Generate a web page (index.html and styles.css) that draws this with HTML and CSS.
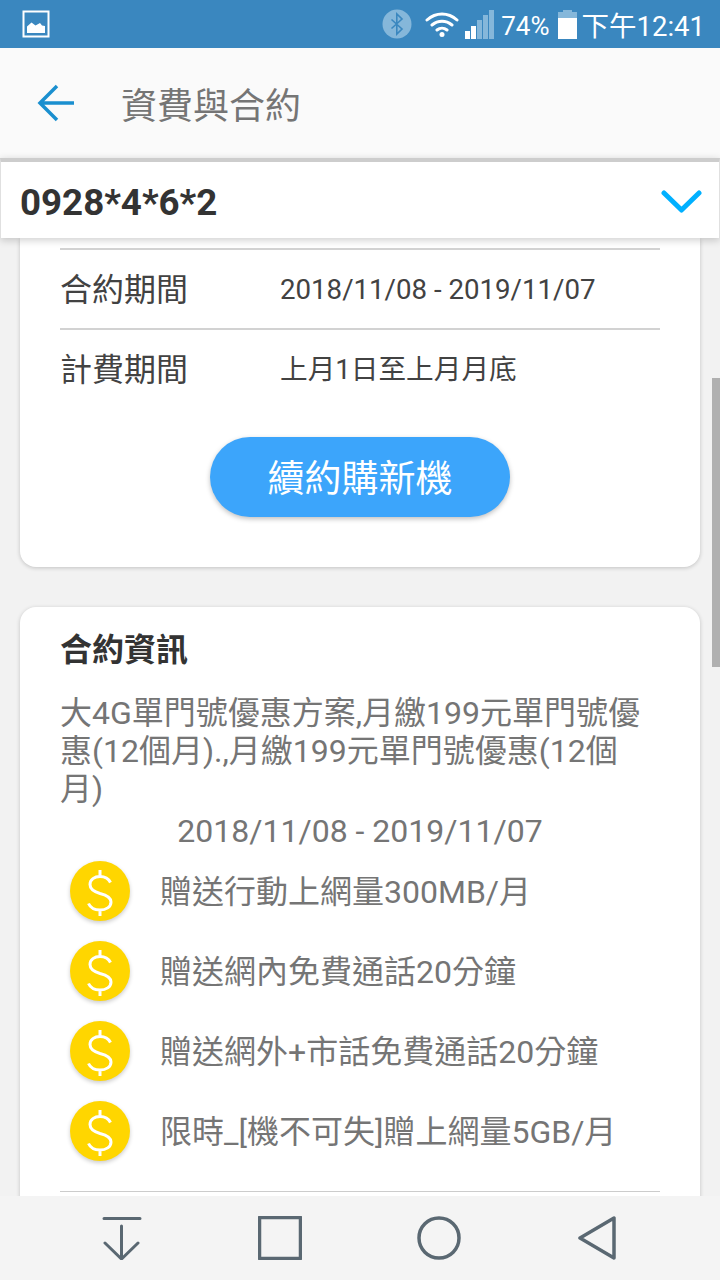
FILE: index.html
```html
<!DOCTYPE html>
<html lang="zh-Hant">
<head>
  <meta charset="UTF-8">
  <title>資費與合約</title>
  <link rel="stylesheet" href="styles.css">
</head>
<body>
  <div class="screen">
    <div class="statusbar">
      <svg class="pic-icon" width="28" height="28" viewBox="0 0 28 28">
        <rect x="1.500" y="1.500" width="25" height="25" fill="none" stroke="#fff" stroke-width="2"/>
        <path d="M5 23V16.500L9.500 12.500L13.500 15.500L18 13L20 15.500L23 16V23Z" fill="#fff"/>
      </svg>
      <div class="status-right">
        <svg width="30" height="30" viewBox="0 0 30 30">
          <circle cx="15" cy="15" r="14.500" fill="#85b7da"/>
          <path d="M9.500 10.500L20 20L14.800 25V5L20 10L9.500 19.500" fill="none" stroke="#3a87bf" stroke-width="1.600"/>
        </svg>
        <svg class="wifi" width="34" height="28" viewBox="0 0 34 28">
          <path d="M2 10C11 2 23 2 32 10M7 15C13 10 21 10 27 15M12 20C15 17.500 19 17.500 22 20" fill="none" stroke="#fff" stroke-width="3" stroke-linecap="round"/>
          <circle cx="17" cy="24.500" r="2.500" fill="#fff"/>
        </svg>
        <svg class="signal" width="29" height="29" viewBox="0 0 29 29">
          <rect x="0" y="21" width="5" height="8" fill="#fff"/>
          <rect x="6" y="16" width="5" height="13" fill="#fff"/>
          <rect x="12" y="10" width="5" height="19" fill="#85b7da"/>
          <rect x="18" y="5" width="5" height="24" fill="#85b7da"/>
          <rect x="24" y="0" width="5" height="29" fill="#85b7da"/>
        </svg>
        <span class="battery-text">74%</span>
        <svg class="battery" width="19" height="29" viewBox="0 0 19 29">
          <path d="M5 0H14V2H19V29H0V2H5Z" fill="#85b7da"/>
          <rect y="8" width="19" height="21" fill="#fff"/>
        </svg>
        <span class="clock">下午12:41</span>
      </div>
    </div>

    <header class="topbar">
      <svg class="back" width="38" height="38" viewBox="0 0 38 38">
        <path d="M37 19H3M20 2L3 19L20 36" fill="none" stroke="#1a8fcf" stroke-width="3.500"/>
      </svg>
      <h1>資費與合約</h1>
    </header>

    <div class="number-select">
      <span>0928*4*6*2</span>
      <svg width="41" height="24" viewBox="0 0 41 24">
        <path d="M3 3L20.500 20L38 3" fill="none" stroke="#00b0ff" stroke-width="5" stroke-linecap="round" stroke-linejoin="round"/>
      </svg>
    </div>

    <div class="content">
      <section class="card card-first">
        <div class="info-row"><span class="info-label">合約期間</span><span class="info-value">2018/11/08 - 2019/11/07</span></div>
        <div class="info-row"><span class="info-label">計費期間</span><span class="info-value info-value-cjk">上月1日至上月月底</span></div>
        <button class="renew">續約購新機</button>
      </section>

      <section class="card card-second">
        <h2>合約資訊</h2>
        <p class="plan">大4G單門號優惠方案,月繳199元單門號優惠(12個月).,月繳199元單門號優惠(12個月)</p>
        <p class="plan-date">2018/11/08 - 2019/11/07</p>
        <ul class="perks">
          <li>
            <svg class="coin" width="60" height="60" viewBox="0 0 60 60"><use href="#dollar"/></svg>
            <span class="perk-text">贈送行動上網量300MB/月</span>
          </li>
          <li>
            <svg class="coin" width="60" height="60" viewBox="0 0 60 60"><use href="#dollar"/></svg>
            <span class="perk-text">贈送網內免費通話20分鐘</span>
          </li>
          <li>
            <svg class="coin" width="60" height="60" viewBox="0 0 60 60"><use href="#dollar"/></svg>
            <span class="perk-text">贈送網外+市話免費通話20分鐘</span>
          </li>
          <li>
            <svg class="coin" width="60" height="60" viewBox="0 0 60 60"><use href="#dollar"/></svg>
            <span class="perk-text">限時_[機不可失]贈上網量5GB/月</span>
          </li>
        </ul>
        <div class="divider"></div>
      </section>
    </div>

    <div class="scrollbar"></div>

    <nav class="navbar">
      <svg width="40" height="44" viewBox="0 0 40 44">
        <path d="M2 2.500H38M19.500 10V43M3 27L19.500 43L36 27" fill="none" stroke="#5a6872" stroke-width="3" stroke-linecap="round" stroke-linejoin="round"/>
      </svg>
      <svg width="44" height="44" viewBox="0 0 44 44">
        <rect x="1.500" y="1.500" width="41" height="41" fill="none" stroke="#5a6872" stroke-width="3.500" stroke-linejoin="round"/>
      </svg>
      <svg width="44" height="44" viewBox="0 0 44 44">
        <circle cx="22" cy="22" r="20" fill="none" stroke="#5a6872" stroke-width="3.500"/>
      </svg>
      <svg width="40" height="44" viewBox="0 0 40 44">
        <path d="M37 2V42L3 22Z" fill="none" stroke="#5a6872" stroke-width="3.500" stroke-linejoin="round"/>
      </svg>
    </nav>

    <svg class="icon-defs" width="0" height="0">
      <path id="dollar" d="M40.500 21.500C38.500 17.500 34.500 15.500 30 15.500C24.500 15.500 20 18.500 20 23.500C20 29 25 31 30 32.500C36 34 41 36 41 41C41 46 36 49 30 49C25 49 20.500 47 18.500 42.500M30 9V15.500M30 49V55" fill="none" stroke="#fff" stroke-width="3"/>
    </svg>
  </div>
</body>
</html>
```

FILE: styles.css
```css
* {
  box-sizing: border-box;
}

body {
  margin: 0;
  font-family: Roboto, "Noto Sans CJK TC", sans-serif;
}

.screen {
  position: relative;
  width: 720px;
  height: 1280px;
  display: flex;
  flex-direction: column;
  overflow: hidden;
  background: #f2f2f2;
}

.statusbar {
  height: 48px;
  flex: none;
  display: flex;
  align-items: center;
  justify-content: space-between;
  padding: 0 15px 0 22px;
  background: #3a87bf;
  color: #fff;
}

.status-right {
  display: flex;
  align-items: center;
}

.wifi {
  margin-left: 13px;
}

.signal {
  margin-left: 6px;
}

.battery-text {
  margin: 4px 0 0 7px;
  font-size: 26px;
}

.battery {
  margin-left: 8px;
}

.clock {
  margin-left: 5px;
  font-size: 27.500px;
}

.topbar {
  height: 110px;
  flex: none;
  display: flex;
  align-items: center;
  padding-left: 37px;
  background: #fafafa;
}

.topbar h1 {
  margin: 0 0 0 46px;
  font-size: 36px;
  font-weight: 400;
  color: #757575;
}

.number-select {
  height: 80px;
  flex: none;
  display: flex;
  align-items: center;
  justify-content: space-between;
  padding: 4px 17px 0 19px;
  position: relative;
  z-index: 1;
  background: #fff;
  border-top: 4px solid #cdcdcd;
  border-left: 1px solid #e0e0e0;
  border-right: 1px solid #e0e0e0;
  box-shadow: 0 2px 8px rgba(0, 0, 0, 0.2);
  font-size: 36.700px;
  font-weight: 700;
  color: #333;
}

.content {
  flex: 1;
  min-height: 0;
  padding: 0 20px;
  overflow: hidden;
}

.card {
  background: #fff;
  box-shadow: 0 1px 4px rgba(0, 0, 0, 0.2);
}

.card-first {
  height: 329px;
  padding: 10px 40px 0;
  border-radius: 0 0 16px 16px;
}

.info-row {
  height: 80px;
  display: flex;
  align-items: center;
  border-top: 2px solid #d2d2d2;
}

.info-label {
  width: 220px;
  padding-bottom: 4px;
  font-size: 32px;
  color: #424242;
}

.info-value {
  font-size: 27.650px;
  color: #424242;
}

.info-value-cjk {
  padding-bottom: 4px;
}

.renew {
  display: block;
  width: 300px;
  height: 80px;
  margin: 29px auto 0;
  padding: 0 0 2px;
  border: none;
  border-radius: 40px;
  background: #3ca5fb;
  box-shadow: 0 2px 5px rgba(0, 0, 0, 0.25);
  font-family: inherit;
  font-size: 37px;
  color: #fff;
}

.card-second {
  margin-top: 40px;
  padding: 20px 40px 40px;
  border-radius: 16px 16px 0 0;
}

.card-second h2 {
  margin: 0;
  font-size: 32px;
  font-weight: 700;
  line-height: 46px;
  color: #333;
}

.plan {
  margin: 21px 0 0;
  font-size: 32px;
  line-height: 38px;
  color: #757575;
}

.plan-date {
  margin: 4px 0 0;
  font-size: 32px;
  line-height: 38px;
  text-align: center;
  color: #757575;
}

.perks {
  margin: 0;
  padding: 1px 0 0;
  list-style: none;
}

.perks li {
  height: 80px;
  display: flex;
  align-items: center;
  font-size: 32px;
  color: #757575;
}

.perk-text {
  padding-bottom: 4px;
}

.coin {
  flex: none;
  margin: 0 30px 0 10px;
  border-radius: 50%;
  background: #ffd600;
  box-shadow: 0 2px 4px rgba(0, 0, 0, 0.2);
}

.divider {
  height: 1px;
  margin-top: 20px;
  background: #ccc;
}

.scrollbar {
  position: absolute;
  top: 378px;
  right: 0;
  width: 8px;
  height: 289px;
  background: #b0b0b0;
}

.navbar {
  height: 84px;
  flex: none;
  position: relative;
  z-index: 1;
  display: flex;
  align-items: center;
  justify-content: space-between;
  padding: 0 103px 0 102px;
  background: #f4f4f4;
}

.icon-defs {
  position: absolute;
}
```
